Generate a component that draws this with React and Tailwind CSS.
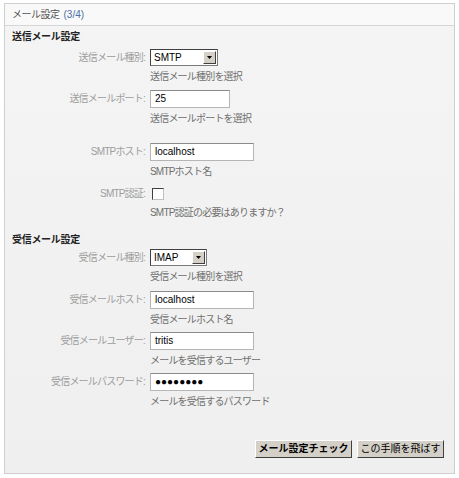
import React from "react";

const font = { fontFamily: '"Liberation Sans", "Noto Sans CJK JP", sans-serif' };

function SelectBox({ value, width }) {
  return (
    <div
      className={`flex items-center justify-between h-[17px] bg-white border border-[#7a7a7a] border-t-[#404040] border-l-[#404040] ${width}`}
    >
      <span className="pl-[3px] text-[10px] leading-none text-black">{value}</span>
      <span className="mr-[1px] w-[13px] h-[13px] bg-[#d4d0c8] border border-t-white border-l-white border-r-[#404040] border-b-[#404040] flex items-center justify-center">
        <svg width="5" height="3" viewBox="0 0 5 3">
          <path d="M0 0h5L2.5 3z" fill="#000" />
        </svg>
      </span>
    </div>
  );
}

function TextBox({ value, width }) {
  return (
    <div
      className={`flex items-center h-[18px] bg-white border border-[#b5b5b5] border-t-[#8a8a8a] ${width}`}
    >
      <span className="pl-[4px] text-[10px] leading-none text-black">{value}</span>
    </div>
  );
}

function Field({ label, hint, children, className = "" }) {
  return (
    <div className={`flex ${className}`}>
      <div className="w-[145px] shrink-0 text-right pr-[5px] text-[10px] tracking-[-0.8px] text-[#9d9d9d] leading-[17px]">
        {label}:
      </div>
      <div className="flex flex-col">
        {children}
        <div className="mt-[4px] text-[10px] tracking-[-0.8px] leading-[13px] text-[#6f6f6f]">{hint}</div>
      </div>
    </div>
  );
}

export default function App() {
  return (
    <div className="w-[459px] h-[478px] bg-white pt-[3px] pl-[4px]" style={font}>
      <div className="w-[451px] h-[471px] border border-[#cfcfcf] bg-[#f2f2f2] flex flex-col">
        {/* header */}
        <div className="h-[22px] bg-[#f9f9f9] border-b border-[#d6d6d6] flex items-center pl-[7px] text-[10px] tracking-[-0.5px] text-[#555]">
          メール設定 <span className="ml-[4px] tracking-normal text-[#4a6fa5]">(3/4)</span>
        </div>

        <div className="flex flex-col flex-1 bg-gradient-to-b from-[#f4f4f4] to-[#efefef]">
          <div className="mt-[4px] pl-[7px] text-[10px] tracking-[-0.3px] font-bold leading-[14px] text-[#222]">送信メール設定</div>

          <Field label="送信メール種別" hint="送信メール種別を選択" className="mt-[5px]">
            <SelectBox value="SMTP" width="w-[68px]" />
          </Field>

          <Field label="送信メールポート" hint="送信メールポートを選択" className="mt-[7px]">
            <TextBox value="25" width="w-[80px]" />
          </Field>

          <Field label="SMTPホスト" hint="SMTPホスト名" className="mt-[18px]">
            <TextBox value="localhost" width="w-[104px]" />
          </Field>

          <Field label="SMTP認証" hint="SMTP認証の必要はありますか？" className="mt-[7px]">
            <div className="h-[17px] flex items-center pl-[2px]">
              <span className="w-[12px] h-[12px] bg-white border border-[#404040] border-r-[#c0c0c0] border-b-[#c0c0c0]" />
            </div>
          </Field>

          <div className="mt-[14px] pl-[7px] text-[10px] tracking-[-0.3px] font-bold leading-[14px] text-[#222]">受信メール設定</div>

          <Field label="受信メール種別" hint="受信メール種別を選択" className="mt-[2px]">
            <SelectBox value="IMAP" width="w-[57px]" />
          </Field>

          <Field label="受信メールホスト" hint="受信メールホスト名" className="mt-[8px]">
            <TextBox value="localhost" width="w-[104px]" />
          </Field>

          <Field label="受信メールユーザー" hint="メールを受信するユーザー" className="mt-[6px]">
            <TextBox value="tritis" width="w-[104px]" />
          </Field>

          <Field label="受信メールパスワード" hint="メールを受信するパスワード" className="mt-[6px]">
            <TextBox value="●●●●●●●●" width="w-[104px]" />
          </Field>

          <div className="flex justify-end gap-[5px] mt-[32px] pr-[10px]">
            <button className="h-[18px] w-[97px] bg-[#d4d0c8] border border-t-white border-l-white border-r-[#404040] border-b-[#404040] text-[10px] font-bold text-black leading-none">
              メール設定チェック
            </button>
            <button className="h-[18px] w-[87px] bg-[#d4d0c8] border border-t-white border-l-white border-r-[#404040] border-b-[#404040] text-[10px] text-black leading-none">
              この手順を飛ばす
            </button>
          </div>
        </div>
      </div>
    </div>
  );
}
